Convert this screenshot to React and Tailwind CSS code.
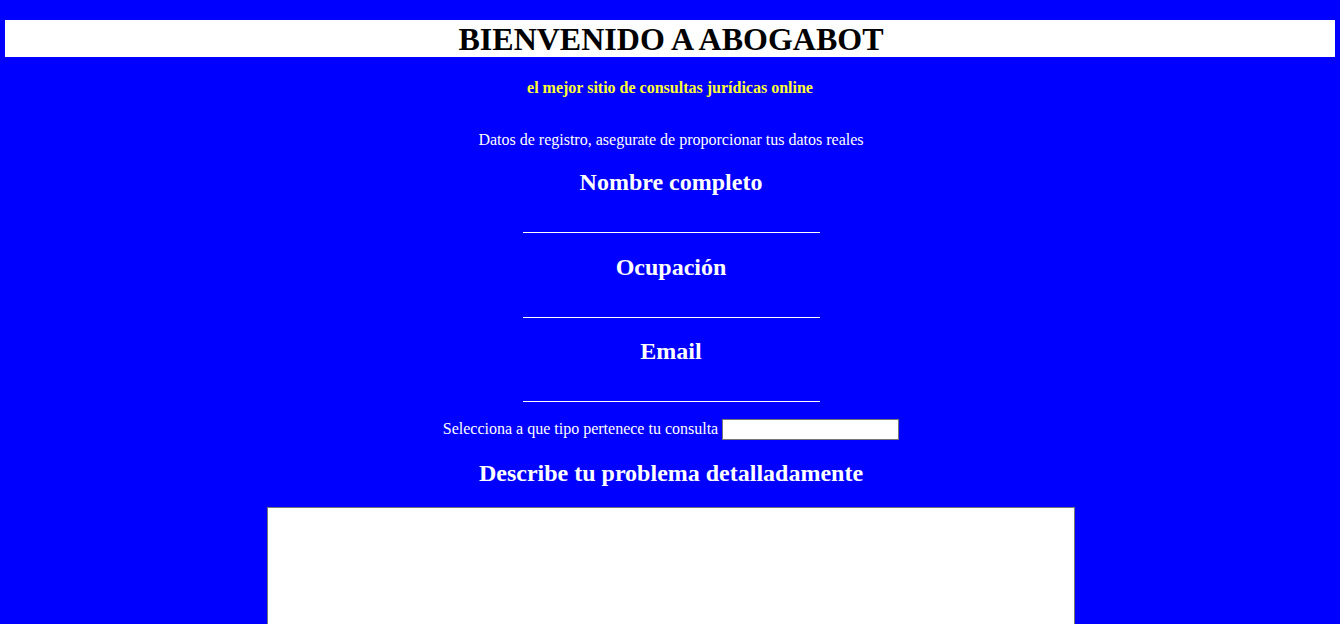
import { useState } from "react";

const fields = ["Nombre completo", "Ocupación", "Email"];

export default function App() {
  const [values, setValues] = useState({});
  const [tipo, setTipo] = useState("");
  const [problema, setProblema] = useState("");

  return (
    <div
      className="min-h-screen bg-[#0000ff] pt-[20px] text-white"
      style={{ fontFamily: '"Liberation Serif", "Times New Roman", serif' }}
    >
      {/* Header */}
      <div className="mx-[5px] h-[37px] bg-white flex items-center justify-center">
        <h1 className="pl-[2px] text-[32px] leading-none font-bold text-black">BIENVENIDO A ABOGABOT</h1>
      </div>

      <p className="mt-[22px] text-center text-[16px] leading-[18px] font-bold text-[#ffff33]">
        el mejor sitio de consultas jurídicas online
      </p>

      {/* Form */}
      <form className="mt-[34px] flex flex-col items-center pl-[2px]" onSubmit={(e) => e.preventDefault()}>
        <p className="text-[16px] leading-[18px]">
          Datos de registro, asegurate de proporcionar tus datos reales
        </p>

        <div className="mt-[19px] flex flex-col items-center">
          <h2 className="text-[24px] leading-[28px] font-bold">{fields[0]}</h2>
          <input
            className="mt-[16px] h-[21px] w-[297px] bg-transparent border-b border-white text-white outline-none"
            value={values[fields[0]] || ""}
            onChange={(e) => setValues({ ...values, [fields[0]]: e.target.value })}
          />
        </div>
        <div className="mt-[20px] flex flex-col items-center">
          <h2 className="text-[24px] leading-[28px] font-bold">{fields[1]}</h2>
          <input
            className="mt-[16px] h-[21px] w-[297px] bg-transparent border-b border-white text-white outline-none"
            value={values[fields[1]] || ""}
            onChange={(e) => setValues({ ...values, [fields[1]]: e.target.value })}
          />
        </div>
        <div className="mt-[19px] flex flex-col items-center">
          <h2 className="text-[24px] leading-[28px] font-bold">{fields[2]}</h2>
          <input
            className="mt-[16px] h-[21px] w-[297px] bg-transparent border-b border-white text-white outline-none"
            value={values[fields[2]] || ""}
            onChange={(e) => setValues({ ...values, [fields[2]]: e.target.value })}
          />
        </div>

        <div className="mt-[15px] flex items-center gap-[4px] text-[16px]">
          <span>Selecciona a que tipo pertenece tu consulta</span>
          <input
            className="h-[21px] w-[177px] bg-white border border-[#767676] text-black outline-none"
            value={tipo}
            onChange={(e) => setTipo(e.target.value)}
          />
        </div>

        <h2 className="mt-[18px] text-[24px] leading-[28px] font-bold">
          Describe tu problema detalladamente
        </h2>

        <textarea
          className="mt-[20px] h-[200px] w-[808px] bg-white border border-[#767676] text-black outline-none resize-none"
          value={problema}
          onChange={(e) => setProblema(e.target.value)}
        />
      </form>
    </div>
  );
}
